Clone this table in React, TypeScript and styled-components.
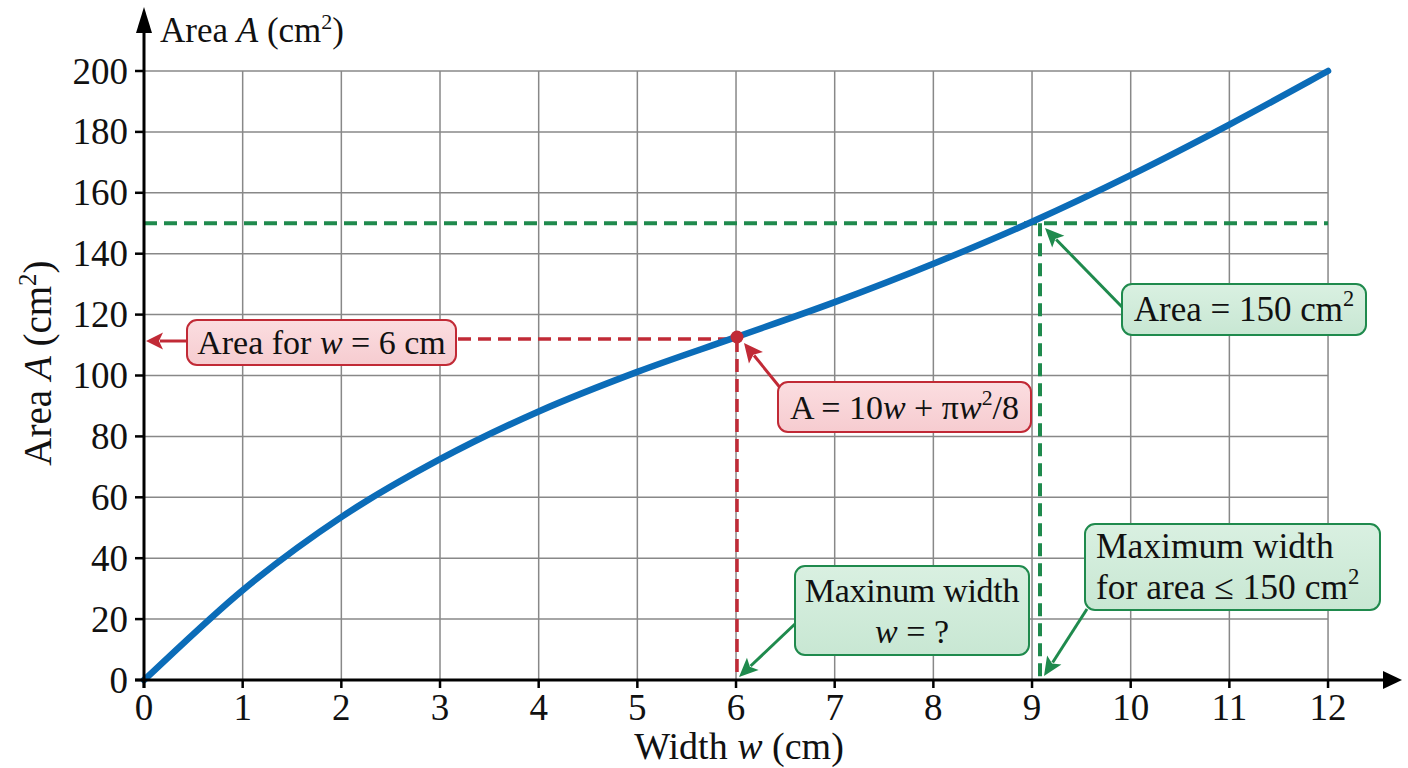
import React from 'react'
import styled, { createGlobalStyle } from 'styled-components'

const RED = '#c12a36'
const GREEN = '#1f8a4d'
const BLUE = '#0b6cb8'
const GRID = '#888888'

const X0 = 144
const UNIT_X = 98.67
const Y0 = 680
const UNIT_Y = 3.045

const px = (w: number) => X0 + w * UNIT_X
const py = (a: number) => Y0 - a * UNIT_Y

const GlobalStyle = createGlobalStyle`
  html, body {
    margin: 0;
    padding: 0;
    background: #ffffff;
  }
  body {
    font-family: "Liberation Serif", "DejaVu Serif", serif;
    color: #111;
  }
`

const Figure = styled.div`
  position: relative;
  width: 1408px;
  height: 768px;
  overflow: hidden;
  background: #fff;
`

const Plot = styled.svg`
  display: block;
  font-family: "Liberation Serif", "DejaVu Serif", serif;
  fill: #111;
`

type Tone = 'red' | 'green'

const Callout = styled.div<{
  $tone: Tone
  $x: number
  $y: number
  $w: number
  $h: number
  $align?: 'center' | 'left'
  $size?: number
}>`
  position: absolute;
  left: ${p => p.$x}px;
  top: ${p => p.$y}px;
  width: ${p => p.$w}px;
  height: ${p => p.$h}px;
  box-sizing: border-box;
  display: flex;
  flex-direction: column;
  justify-content: center;
  align-items: ${p => (p.$align === 'left' ? 'flex-start' : 'center')};
  padding: 0 ${p => (p.$align === 'left' ? 10 : 6)}px;
  border: 2px solid ${p => (p.$tone === 'red' ? RED : GREEN)};
  border-radius: 11px;
  background: ${p =>
    p.$tone === 'red'
      ? 'linear-gradient(180deg, #fbdde0 0%, #f6ccd0 100%)'
      : 'linear-gradient(180deg, #d9f0e1 0%, #c8e7d3 100%)'};
  font-size: ${p => p.$size ?? 34}px;
  line-height: 41px;
  white-space: nowrap;
  color: #111;
`

const Line = styled.div<{ $tight?: boolean }>`
  letter-spacing: ${p => (p.$tight ? '-0.3px' : '0')};
`

const Var = styled.i`
  font-style: italic;
`

const Sup = styled.sup`
  font-size: 0.64em;
  line-height: 0;
  vertical-align: 0.66em;
`

// Curve read off the reference (w, A)
const DATA: [number, number][] = [
  [0, 0],
  [1, 29.5],
  [2, 53.5],
  [3, 72.5],
  [4, 88.2],
  [5, 101.2],
  [6, 112.6],
  [7, 124.1],
  [8, 136.7],
  [9, 150.5],
  [10, 165.8],
  [11, 182.4],
  [12, 200],
]

const curvePath = () => {
  const pts = DATA.map(([w, a]) => [px(w), py(a)])
  let d = `M ${pts[0][0]} ${pts[0][1]}`
  for (let i = 0; i < pts.length - 1; i++) {
    const p0 = pts[Math.max(i - 1, 0)]
    const p1 = pts[i]
    const p2 = pts[i + 1]
    const p3 = pts[Math.min(i + 2, pts.length - 1)]
    const c1x = p1[0] + (p2[0] - p0[0]) / 6
    const c1y = p1[1] + (p2[1] - p0[1]) / 6
    const c2x = p2[0] - (p3[0] - p1[0]) / 6
    const c2y = p2[1] - (p3[1] - p1[1]) / 6
    d += ` C ${c1x} ${c1y}, ${c2x} ${c2y}, ${p2[0]} ${p2[1]}`
  }
  return d
}

interface ArrowProps {
  x1: number
  y1: number
  x2: number
  y2: number
  color: string
  len?: number
  half?: number
  width?: number
}

const Arrow: React.FC<ArrowProps> = ({ x1, y1, x2, y2, color, len = 18, half = 8, width = 3 }) => {
  const dx = x2 - x1
  const dy = y2 - y1
  const l = Math.hypot(dx, dy)
  const ux = dx / l
  const uy = dy / l
  const bx = x2 - ux * len
  const by = y2 - uy * len
  const nx = -uy
  const ny = ux
  const head = `${x2},${y2} ${bx + nx * half},${by + ny * half} ${bx + ux * 4},${by + uy * 4} ${bx - nx * half},${by - ny * half}`
  return (
    <g>
      <line x1={x1} y1={y1} x2={bx + ux * 3} y2={by + uy * 3} stroke={color} strokeWidth={width} />
      <polygon points={head} fill={color} />
    </g>
  )
}

const yTicks = [0, 20, 40, 60, 80, 100, 120, 140, 160, 180, 200]
const xTicks = [0, 1, 2, 3, 4, 5, 6, 7, 8, 9, 10, 11, 12]

const App: React.FC = () => {
  return (
    <Figure>
      <GlobalStyle />
      <Plot width={1408} height={768} viewBox="0 0 1408 768">
        {/* grid */}
        <g stroke={GRID} strokeWidth={1.5}>
          {yTicks.slice(1).map(v => (
            <line key={`h${v}`} x1={X0} y1={py(v)} x2={px(12)} y2={py(v)} />
          ))}
          {xTicks.slice(1).map(w => (
            <line key={`v${w}`} x1={px(w)} y1={py(200)} x2={px(w)} y2={Y0} />
          ))}
        </g>

        {/* guide lines */}
        <g fill="none" strokeWidth={4} strokeDasharray="13 7">
          <line x1={X0} y1={py(150)} x2={px(12)} y2={py(150)} stroke={GREEN} />
          <line x1={1040} y1={py(150)} x2={1040} y2={Y0} stroke={GREEN} />
          <line x1={458} y1={339} x2={737} y2={339} stroke={RED} strokeWidth={3.5} />
          <line x1={737} y1={339} x2={737} y2={Y0} stroke={RED} strokeWidth={3.5} />
        </g>

        {/* curve */}
        <path d={curvePath()} fill="none" stroke={BLUE} strokeWidth={6.5} strokeLinecap="round" />
        <circle cx={737} cy={337} r={6.5} fill={RED} />

        {/* axes */}
        <g stroke="#000" strokeWidth={3}>
          <line x1={X0} y1={688} x2={X0} y2={30} />
          <line x1={135} y1={Y0} x2={1386} y2={Y0} />
          {yTicks.map(v => (
            <line key={`yt${v}`} x1={135} y1={py(v)} x2={X0} y2={py(v)} strokeWidth={2.5} />
          ))}
          {xTicks.map(w => (
            <line key={`xt${w}`} x1={px(w)} y1={Y0} x2={px(w)} y2={688} strokeWidth={2.5} />
          ))}
        </g>
        <polygon points={`${X0},7 ${X0 - 8},33 ${X0 + 8},33`} fill="#000" />
        <polygon points={`1402,${Y0} 1383,${Y0 - 9} 1383,${Y0 + 9}`} fill="#000" />

        {/* tick labels */}
        <g fontSize={37} textAnchor="end">
          {yTicks.map(v => (
            <text key={`yl${v}`} x={128} y={py(v) + 12.5}>
              {v}
            </text>
          ))}
        </g>
        <g fontSize={37} textAnchor="middle">
          {xTicks.map(w => (
            <text key={`xl${w}`} x={px(w)} y={720}>
              {w}
            </text>
          ))}
        </g>

        {/* axis titles */}
        <text x={160} y={42} fontSize={35}>
          Area <tspan fontStyle="italic">A</tspan> (cm
          <tspan fontSize={22} dy={-13}>2</tspan>
          <tspan dy={13}>)</tspan>
        </text>
        <text transform="translate(51 363) rotate(-90)" fontSize={39} textAnchor="middle">
          Area <tspan fontStyle="italic">A</tspan> (cm
          <tspan fontSize={25} dy={-15}>2</tspan>
          <tspan dy={15}>)</tspan>
        </text>
        <text x={739} y={759} fontSize={38} textAnchor="middle">
          Width <tspan fontStyle="italic">w</tspan> (cm)
        </text>

        {/* callout arrows */}
        <Arrow x1={187} y1={341} x2={146} y2={341} color={RED} len={17} half={8.5} />
        <Arrow x1={782} y1={390} x2={744} y2={343} color={RED} len={19} half={9} />
        <Arrow x1={1123} y1={308} x2={1045} y2={228} color={GREEN} len={19} half={8.5} />
        <Arrow x1={796} y1={623} x2={739} y2={677} color={GREEN} len={19} half={8.5} />
        <Arrow x1={1087} y1={609} x2={1044} y2={676} color={GREEN} len={19} half={8.5} />
      </Plot>

      <Callout $tone="red" $x={186} $y={319} $w={271} $h={47}>
        <Line>
          Area for <Var>w</Var> = 6 cm
        </Line>
      </Callout>

      <Callout $tone="red" $x={777} $y={381} $w={255} $h={52}>
        <Line>
          A = 10<Var>w</Var> + π<Var>w</Var>
          <Sup>2</Sup>/8
        </Line>
      </Callout>

      <Callout $tone="green" $x={1121} $y={283} $w={246} $h={53} $size={35}>
        <Line>
          Area = 150 cm<Sup>2</Sup>
        </Line>
      </Callout>

      <Callout $tone="green" $x={794} $y={565} $w={236} $h={91}>
        <Line $tight>Maxinum width</Line>
        <Line>
          <Var>w</Var> = ?
        </Line>
      </Callout>

      <Callout $tone="green" $x={1084} $y={523} $w={297} $h={88} $align="left" $size={35.5}>
        <Line>Maximum width</Line>
        <Line>
          for area ≤ 150 cm<Sup>2</Sup>
        </Line>
      </Callout>
    </Figure>
  )
}

export default App
